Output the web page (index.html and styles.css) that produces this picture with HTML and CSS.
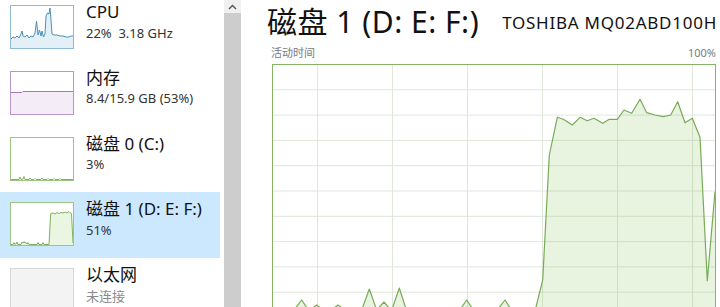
FILE: index.html
```html
<!DOCTYPE html>
<html lang="zh-CN">
<head>
<meta charset="utf-8">
<title>任务管理器 - 性能</title>
<link rel="stylesheet" href="styles.css">
</head>
<body>
<div class="app">
  <nav class="sidebar">
    <div class="item">
      <div class="thumb thumb-cpu">
        <svg viewBox="0 0 62 42" width="62" height="42" preserveAspectRatio="none">
          <polygon class="cpu-fill" points="0,33 2,31 4,32 6,30 8,32 10,28 11,25 12,30 14,31 16,29 18,32 20,30 22,31 24,27 25.5,15 27,29 28.5,24 30,30 31,25 32.5,31 34,28 35,10 36.5,7 38,8 39,2 40,14 41,28 43,29 46,29 49,30 52,30 55,31 58,31 60,30 62,30 62,42 0,42"/>
          <polyline class="cpu-line" points="0,33 2,31 4,32 6,30 8,32 10,28 11,25 12,30 14,31 16,29 18,32 20,30 22,31 24,27 25.5,15 27,29 28.5,24 30,30 31,25 32.5,31 34,28 35,10 36.5,7 38,8 39,2 40,14 41,28 43,29 46,29 49,30 52,30 55,31 58,31 60,30 62,30"/>
        </svg>
      </div>
      <div class="info">
        <div class="name">CPU</div>
        <div class="value">22%&nbsp; 3.18 GHz</div>
      </div>
    </div>
    <div class="item">
      <div class="thumb thumb-mem">
        <svg viewBox="0 0 62 42" width="62" height="42" preserveAspectRatio="none">
          <polygon class="mem-fill" points="0,20.5 11,20.5 12,19.5 62,19.5 62,42 0,42"/>
          <polyline class="mem-line" points="0,20.5 11,20.5 12,19.5 62,19.5"/>
        </svg>
      </div>
      <div class="info">
        <div class="name">内存</div>
        <div class="value">8.4/15.9 GB (53%)</div>
      </div>
    </div>
    <div class="item">
      <div class="thumb thumb-disk">
        <svg viewBox="0 0 62 42" width="62" height="42" preserveAspectRatio="none">
          <polyline class="disk-line" points="0,41.5 8,41.5 9,39 10,41.5 12,41 13,38.5 14,41.5 18,41.5 19,40 20,41.5 23,41.5 24,40.5 25,41.5 30,41.5 31,40 32,41.5 36,41.5 37,40.5 38,41.5 42,41.5 43,40.5 44,41.5 48,41.5 49,40.5 50,41.5 62,41.5"/>
        </svg>
      </div>
      <div class="info">
        <div class="name">磁盘 0 (C:)</div>
        <div class="value">3%</div>
      </div>
    </div>
    <div class="item selected">
      <div class="thumb thumb-disk">
        <svg viewBox="0 0 62 42" width="62" height="42" preserveAspectRatio="none">
          <polygon class="disk-fill" points="0,41.5 2,41.5 3,39.5 4,41.5 5,41 6,39 7,41.5 10,41.5 11,39 12,40 13,38.5 14,40 15,39.5 16,41 17,39.5 18,41.5 26,41.5 27,39.5 28,41.5 31,41.5 32,39.5 33,41.5 38,41.5 39.7,10.5 42,10 44,11 46,9.5 48,10.5 50,9.5 52,10 54,9 56,10 58,8.5 60.5,11 62,40 62,42 0,42"/>
          <polyline class="disk-line" points="0,41.5 2,41.5 3,39.5 4,41.5 5,41 6,39 7,41.5 10,41.5 11,39 12,40 13,38.5 14,40 15,39.5 16,41 17,39.5 18,41.5 26,41.5 27,39.5 28,41.5 31,41.5 32,39.5 33,41.5 38,41.5 39.7,10.5 42,10 44,11 46,9.5 48,10.5 50,9.5 52,10 54,9 56,10 58,8.5 60.5,11 62,40"/>
        </svg>
      </div>
      <div class="info">
        <div class="name">磁盘 1 (D: E: F:)</div>
        <div class="value">51%</div>
      </div>
    </div>
    <div class="item">
      <div class="thumb thumb-eth"></div>
      <div class="info">
        <div class="name">以太网</div>
        <div class="value muted">未连接</div>
      </div>
    </div>
  </nav>
  <div class="scrollbar">
    <div class="scroll-up">
      <svg viewBox="0 0 9 6" width="9" height="6"><polyline points="1,5 4.5,1.5 8,5" fill="none" stroke="#555" stroke-width="1.4"/></svg>
    </div>
    <div class="scroll-thumb"></div>
  </div>
  <main class="main">
    <header class="header">
      <h1 class="title">磁盘 1 (D: E: F:)</h1>
      <div class="model">TOSHIBA MQ02ABD100H</div>
    </header>
    <div class="chart-labels">
      <span>活动时间</span>
      <span>100%</span>
    </div>
    <div class="chart">
      <svg viewBox="0 0 444 254" width="444" height="254">
        <g class="grid">
          <line x1="45.5" y1="0" x2="45.5" y2="254"/>
          <line x1="120.5" y1="0" x2="120.5" y2="254"/>
          <line x1="195.5" y1="0" x2="195.5" y2="254"/>
          <line x1="270.5" y1="0" x2="270.5" y2="254"/>
          <line x1="345.5" y1="0" x2="345.5" y2="254"/>
          <line x1="420.5" y1="0" x2="420.5" y2="254"/>
          <line x1="0" y1="25.8" x2="444" y2="25.8"/>
          <line x1="0" y1="51.1" x2="444" y2="51.1"/>
          <line x1="0" y1="76.4" x2="444" y2="76.4"/>
          <line x1="0" y1="101.7" x2="444" y2="101.7"/>
          <line x1="0" y1="127" x2="444" y2="127"/>
          <line x1="0" y1="152.3" x2="444" y2="152.3"/>
          <line x1="0" y1="177.6" x2="444" y2="177.6"/>
          <line x1="0" y1="202.9" x2="444" y2="202.9"/>
          <line x1="0" y1="228.2" x2="444" y2="228.2"/>
        </g>
        <polygon class="area" points="0,247 7,247 15,248 22,246 29.7,236 37,247 44.7,241 52,247 59,246 66,241 74,247 82,247 89.7,246 97.3,225 104.7,246 112,238 119.5,247 127.3,224 134.7,247 142,248 149.5,247 157,248 164.5,247 172,248 179.5,247 187,247 194.7,236 202,247 209.5,248 217,247 224.5,247 233,236 240,247 247.5,248 255,247 263,247 270.7,216 277.3,91 285.3,53.3 291.3,55.3 300.3,61 308,53.3 315.3,56.7 322,54.3 330.7,59.3 337.3,55.3 345.3,55.3 352,46 359.7,49.3 368,35.3 374.7,48.7 383,51 391.3,52.7 398.7,51 405.7,37.7 413,58.7 420.3,54.3 428,73.3 435.3,216.7 443,127.7 443,254 0,254"/>
        <polyline class="line" points="0,247 7,247 15,248 22,246 29.7,236 37,247 44.7,241 52,247 59,246 66,241 74,247 82,247 89.7,246 97.3,225 104.7,246 112,238 119.5,247 127.3,224 134.7,247 142,248 149.5,247 157,248 164.5,247 172,248 179.5,247 187,247 194.7,236 202,247 209.5,248 217,247 224.5,247 233,236 240,247 247.5,248 255,247 263,247 270.7,216 277.3,91 285.3,53.3 291.3,55.3 300.3,61 308,53.3 315.3,56.7 322,54.3 330.7,59.3 337.3,55.3 345.3,55.3 352,46 359.7,49.3 368,35.3 374.7,48.7 383,51 391.3,52.7 398.7,51 405.7,37.7 413,58.7 420.3,54.3 428,73.3 435.3,216.7 443,127.7"/>
        <rect class="frame" x="0.5" y="0.5" width="443" height="253"/>
      </svg>
    </div>
  </main>
</div>
</body>
</html>
```
FILE: styles.css
```css
html, body {
  margin: 0;
  padding: 0;
  width: 720px;
  height: 307px;
  overflow: hidden;
  background: #ffffff;
}

body {
  font-family: "Noto Sans", "Noto Sans CJK SC", sans-serif;
  color: #1a1a1a;
}

.app {
  display: flex;
  height: 307px;
}

/* ---------- sidebar ---------- */
.sidebar {
  width: 220px;
  flex: none;
  display: flex;
  flex-direction: column;
  margin-top: -5px;
  margin-right: 4px;
}

.item {
  height: 65.75px;
  flex: none;
  display: flex;
  align-items: flex-start;
  box-sizing: border-box;
  padding: 0 0 0 10px;
  gap: 12px;
}

.item.selected {
  background: #cce8ff;
}

.thumb {
  width: 64px;
  height: 44px;
  margin-top: 10px;
  box-sizing: border-box;
  border: 1px solid #9cc483;
  background: #ffffff;
  flex: none;
}

.thumb svg {
  display: block;
}

.thumb-cpu { border-color: #8fbad6; }
.thumb-mem { border-color: #b996c8; }
.thumb-eth { border-color: #d6d6d6; background: #f3f3f3; }

.cpu-fill { fill: #e4f0f8; }
.cpu-line { fill: none; stroke: #4b90bb; stroke-width: 1; }
.mem-fill { fill: #f4edf7; }
.mem-line { fill: none; stroke: #a47bb6; stroke-width: 1; }
.disk-fill { fill: #eaf5e2; }
.disk-line { fill: none; stroke: #7fb25e; stroke-width: 1; }

.info {
  padding-top: 7px;
  min-width: 0;
}

.name {
  font-size: 17px;
  line-height: 20px;
  color: #111;
  white-space: nowrap;
}

.value {
  font-size: 13px;
  line-height: 16px;
  margin-top: 2.5px;
  color: #333;
  white-space: nowrap;
}

.value.muted {
  color: #8a8a8a;
}

/* ---------- scrollbar ---------- */
.scrollbar {
  width: 17px;
  flex: none;
  display: flex;
  flex-direction: column;
  background: #cdcdcd;
}

.scroll-up {
  height: 13px;
  background: #f0f0f0;
  display: flex;
  align-items: center;
  justify-content: center;
}

.scroll-up svg { display: block; }

.scroll-thumb {
  flex: 1;
  background: #cdcdcd;
}

/* ---------- main ---------- */
.main {
  flex: 1;
  min-width: 0;
  padding: 0 0 0 26px;
}

.header {
  display: flex;
  align-items: flex-start;
  height: 46px;
  gap: 23px;
}

.title {
  margin: 3.5px 0 0;
  font-size: 30px;
  font-weight: 400;
  letter-spacing: 0.5px;
  line-height: 36px;
  color: #111;
  white-space: nowrap;
}

.model {
  margin-top: 12.5px;
  font-size: 17px;
  letter-spacing: 0.75px;
  line-height: 20px;
  color: #111;
  white-space: nowrap;
}

.chart-labels {
  display: flex;
  justify-content: space-between;
  font-size: 11px;
  line-height: 14px;
  color: #7a7a7a;
  margin-left: 4px;
  width: 445px;
}

.chart {
  margin-left: 5px;
  margin-top: 4px;
  width: 444px;
  height: 254px;
}

.chart svg { display: block; }

.grid line {
  stroke: #dfe7da;
  stroke-width: 1;
}

.area { fill: rgba(139, 195, 100, 0.2); }
.line { fill: none; stroke: #78ab58; stroke-width: 1.2; stroke-linejoin: round; }
.frame { fill: none; stroke: #86b466; stroke-width: 1; }
```
